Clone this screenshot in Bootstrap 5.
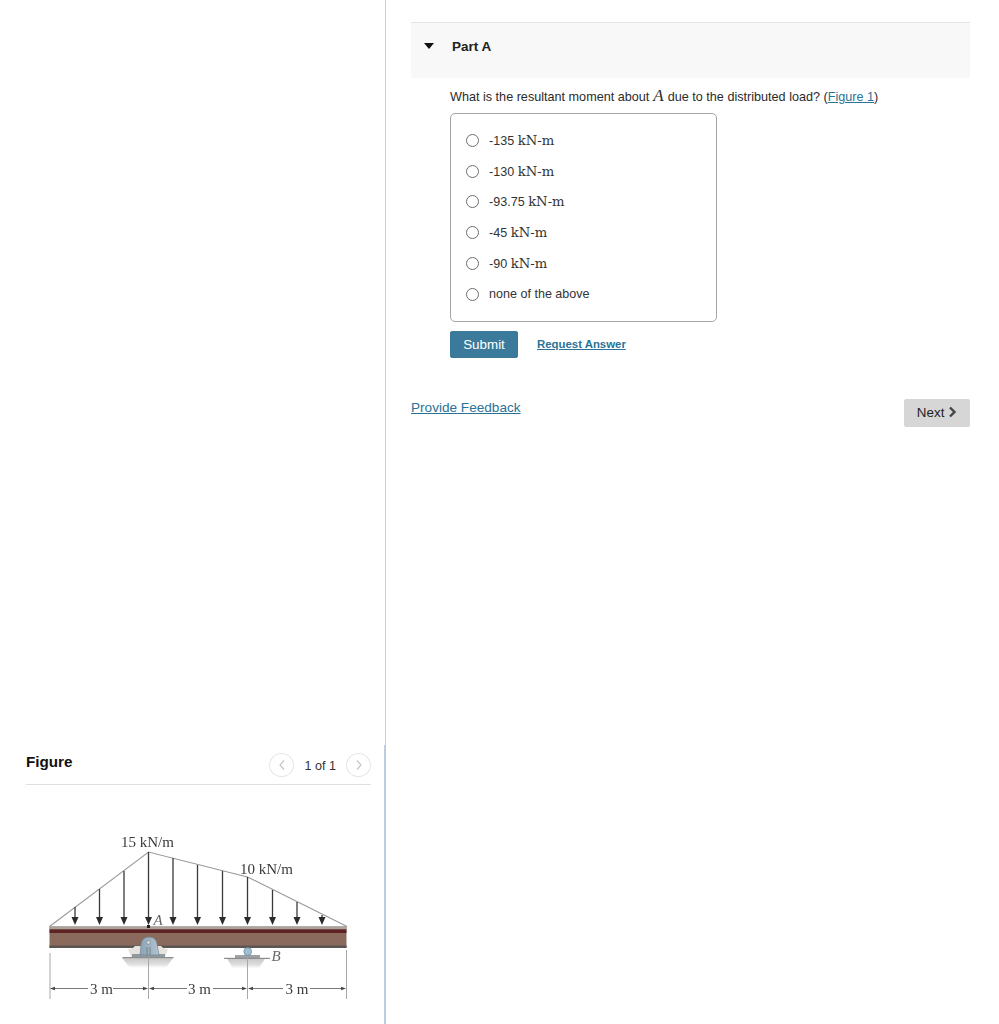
<!DOCTYPE html>
<html lang="en"><head><meta charset="utf-8"><title>Part A</title>
<link href="https://cdn.jsdelivr.net/npm/bootstrap@5.3.0/dist/css/bootstrap.min.css" rel="stylesheet">
<style>
html,body{height:1024px;overflow:hidden}
body{font-family:"Liberation Sans",Arial,sans-serif;color:#222;font-size:12.6px;background:#fff}
.shell{height:1024px}
.leftpane{width:386px;flex:none;position:relative;border-right:1px solid #cfcfcf}
.leftpane::after{content:"";position:absolute;right:-1px;top:745px;bottom:0;width:2px;background:#bccde0}
.figpanel{padding:0 14px 0 26px;height:279px}
.fighead{height:40px;border-bottom:1px solid #dcdfe3;padding-top:8px}
.figtitle{font-size:15.2px;font-weight:700;color:#111;line-height:20px;margin-top:-1px}
.pager{font-size:12.6px;color:#333;gap:10px}
.pagerlabel{position:relative;top:1px}
.pgcirc{width:25px;height:24px;border:1px solid #e6e6e6;border-radius:50%;background:#fff}
.figsvg{display:block;width:345px;height:239px;filter:blur(.45px)}
.rightpane{flex:1;padding:22px 29px 0 25px}
.parthead{height:56px;background:#f8f8f8;border-top:1px solid #e3e3e3;padding:15px 0 0 13px}
.caret{width:0;height:0;border-left:5.5px solid transparent;border-right:5.5px solid transparent;border-top:6px solid #111;margin-top:5px}
.parttitle{font-weight:700;font-size:13.5px;margin-left:18px;line-height:18px;color:#222}
.partbody{padding-left:39px}
.question{margin:0;padding-top:11px;line-height:17px;height:35px;font-size:12.63px;color:#2b2b2b}
.qlink{color:#2a7396;text-decoration:underline}
.mathi{font-family:"Liberation Serif",serif;font-style:italic;font-size:17px;line-height:12px;margin:0 .5px}
.optbox{width:267px;height:209px;border:1px solid #a5a5a5;border-radius:5px;padding:11px 0 0 15px}
.optrow{height:30.75px;gap:10px}
.dot{width:13px;height:13px;border:1px solid #6d6d6d;border-radius:50%;flex:none;background:#fff}
.unit{font-family:"DejaVu Serif","Liberation Serif",serif;font-size:13.2px}
.optrow>span{font-size:12.57px;color:#333;margin-top:1px}
.actions{margin-top:9px;height:27px;gap:19px}
.btnsubmit{--bs-btn-bg:#3b7a9b;--bs-btn-border-color:#3b7a9b;--bs-btn-hover-bg:#3b7a9b;--bs-btn-hover-border-color:#3b7a9b;--bs-btn-color:#fff;--bs-btn-hover-color:#fff;--bs-btn-padding-x:0;--bs-btn-padding-y:0;--bs-btn-font-size:13.4px;--bs-btn-border-radius:2px;width:68px;height:27px;line-height:25px}
.reqans{font-weight:700;font-size:11.4px;color:#2a7396}
.footrow{margin-top:42px}
.feedback{font-size:13.6px;color:#2a7396;line-height:16px}
.btnnext{--bs-btn-bg:#d6d6d6;--bs-btn-border-color:#d6d6d6;--bs-btn-hover-bg:#d6d6d6;--bs-btn-hover-border-color:#d6d6d6;--bs-btn-color:#222;--bs-btn-hover-color:#222;--bs-btn-padding-x:0;--bs-btn-padding-y:0;--bs-btn-font-size:13.4px;--bs-btn-border-radius:2px;width:66px;height:28px;line-height:26px;margin-top:-1px}
.nextchev{vertical-align:-1px}
</style></head><body>
<div class="shell d-flex">
<aside class="leftpane d-flex flex-column justify-content-end">
<section class="figpanel">
<div class="fighead d-flex justify-content-between align-items-start">
<div class="figtitle">Figure</div>
<div class="pager d-flex align-items-center">
<span class="pgcirc d-flex align-items-center justify-content-center"><svg width="8" height="12" viewBox="0 0 8 12"><path d="M6 1.500 2 6l4 4.500" fill="none" stroke="#c4c4c4" stroke-width="1.200"/></svg></span>
<span class="pagerlabel">1 of 1</span>
<span class="pgcirc d-flex align-items-center justify-content-center"><svg width="8" height="12" viewBox="0 0 8 12"><path d="M2 1.500 6 6l-4 4.500" fill="none" stroke="#c4c4c4" stroke-width="1.200"/></svg></span>
</div>
</div>
<svg class="figsvg" viewBox="26 785 345 239" xmlns="http://www.w3.org/2000/svg">
<defs>
<linearGradient id="gd" x1="0" y1="0" x2="0" y2="1"><stop offset="0" stop-color="#c8c8c8"/><stop offset=".6" stop-color="#dedede"/><stop offset="1" stop-color="#fff"/></linearGradient>
<linearGradient id="pin" x1="0" y1="0" x2="1" y2="0"><stop offset="0" stop-color="#8aa3b5"/><stop offset="1" stop-color="#b3c3cf"/></linearGradient>
</defs>
<path d="M49.500 926.500 148.500 852 247.500 877 347 926.500" fill="none" stroke="#9a9a9a" stroke-width="1.100"/>
<g stroke="#3a3a3a" stroke-width="1.300">
<path d="M75 907v12M99.500 889v30M124 871v48M148.500 852v67M173 858v61M197.500 865v54M222.500 871v48M247.500 877v42M272.500 890v29M297 902v17M322 915v4"/>
</g>
<g fill="#2b2b2b">
<path d="M71.500 917h7L75 925z"/><path d="M96 917h7l-3.500 8z"/><path d="M120.500 917h7l-3.500 8z"/><path d="M145 917h7l-3.500 8z"/><path d="M169.500 917h7l-3.500 8z"/><path d="M194 917h7l-3.500 8z"/><path d="M219 917h7l-3.500 8z"/><path d="M244 917h7l-3.500 8z"/><path d="M269 917h7l-3.500 8z"/><path d="M293.500 917h7l-3.500 8z"/><path d="M318.500 917h7l-3.500 8z"/>
</g>
<rect x="49.500" y="926.500" width="297" height="21.500" fill="#8a6a5c"/>
<rect x="49.500" y="926.500" width="297" height="2.500" fill="#aaa39d"/>
<rect x="49.500" y="929.500" width="297" height="3.500" fill="#5e2424"/>
<rect x="49.500" y="945.500" width="297" height="2.500" fill="#5a5552"/>
<rect x="147" y="925" width="3" height="3" fill="#222"/>
<path d="M122 958h51l-7 10h-36z" fill="url(#gd)"/>
<path d="M128 949q5 0 7-3h26q2 3 7 3l-3 8h-34z" fill="#e6e3df"/>
<rect x="132" y="954" width="33" height="3.500" fill="#8f9a9f"/>
<rect x="122.500" y="957" width="51" height="1.200" fill="#8d8d8d"/>
<path d="M140 955l1-11q1-7 8-7t8 7l2 11z" fill="url(#pin)" stroke="#6f7f8a" stroke-width=".6"/>
<circle cx="148.500" cy="942.500" r="1.700" fill="#e4ebef" stroke="#5f6f7a" stroke-width=".5"/>
<path d="M147 947v8M150 947v8" stroke="#5f6f7a" stroke-width=".7"/>
<path d="M227 958.500h38l-6 10h-26z" fill="url(#gd)"/>
<rect x="235" y="955" width="25" height="3" fill="#9ba3a6"/>
<rect x="224" y="957.800" width="46" height="1.200" fill="#8d8d8d"/>
<circle cx="247.700" cy="951.500" r="3.900" fill="#9fbfd2" stroke="#5f7584" stroke-width=".6"/>
<g stroke="#a8a8a8" stroke-width="1" fill="none">
<path d="M50 953v46M148.500 957v42M247.500 958v41M346.500 950v49"/>
</g>
<g stroke="#555" stroke-width=".8" fill="none">
<path d="M52 988.500h36M113 988.500h33M151 988.500h36M213 988.500h31M251 988.500h32M310 988.500h34"/>
</g>
<path d="M50 988.500l5-1.800v3.600zM148 988.500l-5-1.800v3.600zM149 988.500l5-1.800v3.600zM247 988.500l-5-1.800v3.600zM248 988.500l5-1.800v3.600zM346 988.500l-5-1.800v3.600z" fill="#444"/>
<g font-family="Liberation Serif,serif" fill="#3a3a3a" font-size="15">
<text x="121" y="847">15 kN/m</text>
<text x="240" y="873.500">10 kN/m</text>
<text x="90" y="994">3 m</text>
<text x="188" y="994">3 m</text>
<text x="285.500" y="994">3 m</text>
<text x="153.500" y="925" font-style="italic" fill="#666">A</text>
<text x="271.500" y="961" font-style="italic" fill="#666">B</text>
</g>
</svg>
</section>
</aside>
<main class="rightpane">
<div class="parthead d-flex align-items-start">
<span class="caret"></span><span class="parttitle">Part A</span>
</div>
<div class="partbody">
<p class="question">What is the resultant moment about <span class="mathi">A</span> due to the distributed load? (<a href="#" class="qlink">Figure 1</a>)</p>
<div class="optbox">
<label class="optrow d-flex align-items-center"><i class="dot"></i><span>-135 <span class="unit">kN-m</span></span></label>
<label class="optrow d-flex align-items-center"><i class="dot"></i><span>-130 <span class="unit">kN-m</span></span></label>
<label class="optrow d-flex align-items-center"><i class="dot"></i><span>-93.75 <span class="unit">kN-m</span></span></label>
<label class="optrow d-flex align-items-center"><i class="dot"></i><span>-45 <span class="unit">kN-m</span></span></label>
<label class="optrow d-flex align-items-center"><i class="dot"></i><span>-90 <span class="unit">kN-m</span></span></label>
<label class="optrow d-flex align-items-center"><i class="dot"></i><span>none of the above</span></label>
</div>
<div class="actions d-flex align-items-center">
<button class="btn btnsubmit" type="button">Submit</button>
<a href="#" class="reqans">Request Answer</a>
</div>
</div>
<div class="footrow d-flex justify-content-between align-items-start">
<a href="#" class="feedback">Provide Feedback</a>
<button class="btn btnnext" type="button">Next <svg class="nextchev" width="9" height="12" viewBox="0 0 9 12"><path d="M2 1.500 6.500 6 2 10.500" fill="none" stroke="#444" stroke-width="2.400"/></svg></button>
</div>
</main>
</div>
<script src="https://cdn.jsdelivr.net/npm/bootstrap@5.3.0/dist/js/bootstrap.bundle.min.js"></script>
</body></html>
